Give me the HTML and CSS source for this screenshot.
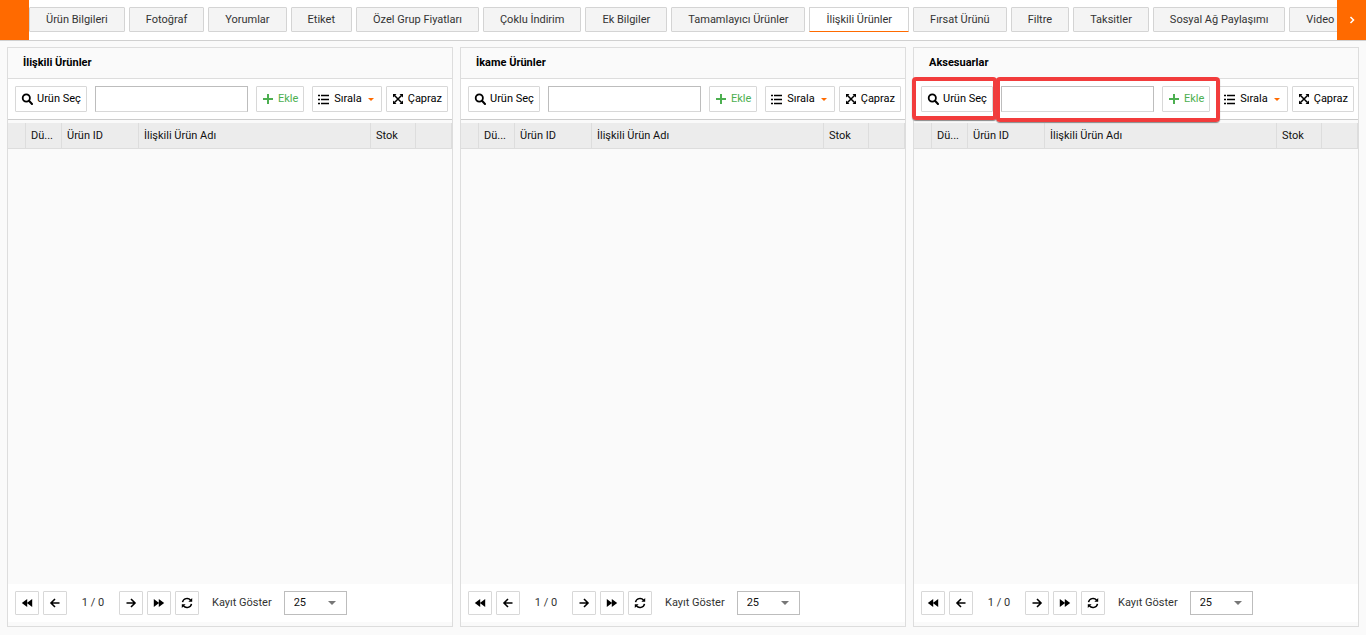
FILE: index.html
```html
<!DOCTYPE html>
<html lang="tr">
<head>
<meta charset="utf-8">
<meta name="viewport" content="width=device-width, initial-scale=1">
<title>İlişkili Ürünler</title>
<link rel="stylesheet" href="styles.css">
</head>
<body class="page">
<svg class="sprite" aria-hidden="true">
  <symbol id="i-search" viewBox="0 0 12 12"><circle cx="5.300" cy="5" r="3.600" fill="none" stroke="currentColor" stroke-width="1.800"/><path d="M8 7.800L11 11" stroke="currentColor" stroke-width="2" stroke-linecap="round"/></symbol>
  <symbol id="i-plus" viewBox="0 0 12 12"><path d="M6 1v10M1 6h10" stroke="currentColor" stroke-width="2"/></symbol>
  <symbol id="i-list" viewBox="0 0 12 12"><path d="M0 2.500h2M0 6.500h2M0 10.500h2M3 2.500h8M3 6.500h8M3 10.500h8" stroke="currentColor" stroke-width="1.600"/></symbol>
  <symbol id="i-cross" viewBox="0 0 12 12"><path d="M2.500 2.500l7 7M9.500 2.500l-7 7" stroke="currentColor" stroke-width="1.500"/><path d="M1 1h3.500L1 4.500zM11 1v3.500L7.500 1zM1 11V7.500L4.500 11zM11 11H7.500L11 7.500z" fill="currentColor"/></symbol>
  <symbol id="i-first" viewBox="0 0 12 12"><path d="M6.200 2v8L.8 6zM11.200 2v8L5.900 6z" fill="currentColor"/></symbol>
  <symbol id="i-last" viewBox="0 0 12 12"><path d="M.8 2l5.300 4L.8 10zM5.800 2l5.400 4-5.400 4z" fill="currentColor"/></symbol>
  <symbol id="i-prev" viewBox="0 0 12 12"><path d="M10.500 6H2.300M6 2L2 6l4 4" fill="none" stroke="currentColor" stroke-width="1.600"/></symbol>
  <symbol id="i-next" viewBox="0 0 12 12"><path d="M1.500 6h8.200M6 2l4 4-4 4" fill="none" stroke="currentColor" stroke-width="1.600"/></symbol>
  <symbol id="i-refresh" viewBox="0 0 12 12"><path d="M1.500 5.200A4.600 4.600 0 0 1 9.600 3.200M10.500 6.800A4.600 4.600 0 0 1 2.400 8.800" fill="none" stroke="currentColor" stroke-width="1.500"/><path d="M11.200 1v3.800H7.400zM.8 11V7.200h3.800z" fill="currentColor"/></symbol>
  <symbol id="i-chevron" viewBox="0 0 12 12"><path d="M4.500 3l3 3-3 3" fill="none" stroke="currentColor" stroke-width="1.500"/></symbol>
</svg>

<header class="tabbar">
  <button class="scroller" type="button" aria-label="Geri"></button>
  <nav class="tabs">
    <button class="tab" type="button">Ürün Bilgileri</button>
    <button class="tab" type="button">Fotoğraf</button>
    <button class="tab" type="button">Yorumlar</button>
    <button class="tab" type="button">Etiket</button>
    <button class="tab" type="button">Özel Grup Fiyatları</button>
    <button class="tab" type="button">Çoklu İndirim</button>
    <button class="tab" type="button">Ek Bilgiler</button>
    <button class="tab" type="button">Tamamlayıcı Ürünler</button>
    <button class="tab tab-active" type="button">İlişkili Ürünler</button>
    <button class="tab" type="button">Fırsat Ürünü</button>
    <button class="tab" type="button">Filtre</button>
    <button class="tab" type="button">Taksitler</button>
    <button class="tab" type="button">Sosyal Ağ Paylaşımı</button>
    <button class="tab" type="button">Video</button>
  </nav>
  <button class="scroller" type="button" aria-label="İleri"><svg class="icon"><use href="#i-chevron"/></svg></button>
</header>

<main class="panels">
  <section class="panel">
    <h2 class="panel-title">İlişkili Ürünler</h2>
    <div class="toolbar">
      <button class="btn" type="button"><svg class="icon"><use href="#i-search"/></svg>Urün Seç</button>
      <input class="field" type="text" aria-label="Ürün">
      <button class="btn btn-add" type="button"><svg class="icon"><use href="#i-plus"/></svg>Ekle</button>
      <div class="group">
        <button class="btn" type="button"><svg class="icon"><use href="#i-list"/></svg>Sırala<span class="caret"></span></button>
        <button class="btn" type="button"><svg class="icon"><use href="#i-cross"/></svg>Çapraz</button>
      </div>
    </div>
    <div class="grid">
      <table class="table">
        <thead><tr><th class="c-mark"></th><th class="c-edit">Dü...</th><th class="c-id">Ürün ID</th><th>İlişkili Ürün Adı</th><th class="c-stock">Stok</th><th class="c-end"></th></tr></thead>
      </table>
    </div>
    <footer class="pager">
      <button class="pg" type="button" aria-label="İlk"><svg class="icon"><use href="#i-first"/></svg></button>
      <button class="pg" type="button" aria-label="Önceki"><svg class="icon"><use href="#i-prev"/></svg></button>
      <span class="count">1 / 0</span>
      <button class="pg" type="button" aria-label="Sonraki"><svg class="icon"><use href="#i-next"/></svg></button>
      <button class="pg" type="button" aria-label="Son"><svg class="icon"><use href="#i-last"/></svg></button>
      <button class="pg" type="button" aria-label="Yenile"><svg class="icon"><use href="#i-refresh"/></svg></button>
      <label class="size-label" for="size1">Kayıt Göster</label>
      <span class="size"><select class="size-select" id="size1"><option>25</option></select></span>
    </footer>
  </section>

  <section class="panel">
    <h2 class="panel-title">İkame Ürünler</h2>
    <div class="toolbar">
      <button class="btn" type="button"><svg class="icon"><use href="#i-search"/></svg>Urün Seç</button>
      <input class="field" type="text" aria-label="Ürün">
      <button class="btn btn-add" type="button"><svg class="icon"><use href="#i-plus"/></svg>Ekle</button>
      <div class="group">
        <button class="btn" type="button"><svg class="icon"><use href="#i-list"/></svg>Sırala<span class="caret"></span></button>
        <button class="btn" type="button"><svg class="icon"><use href="#i-cross"/></svg>Çapraz</button>
      </div>
    </div>
    <div class="grid">
      <table class="table">
        <thead><tr><th class="c-mark"></th><th class="c-edit">Dü...</th><th class="c-id">Ürün ID</th><th>İlişkili Ürün Adı</th><th class="c-stock">Stok</th><th class="c-end"></th></tr></thead>
      </table>
    </div>
    <footer class="pager">
      <button class="pg" type="button" aria-label="İlk"><svg class="icon"><use href="#i-first"/></svg></button>
      <button class="pg" type="button" aria-label="Önceki"><svg class="icon"><use href="#i-prev"/></svg></button>
      <span class="count">1 / 0</span>
      <button class="pg" type="button" aria-label="Sonraki"><svg class="icon"><use href="#i-next"/></svg></button>
      <button class="pg" type="button" aria-label="Son"><svg class="icon"><use href="#i-last"/></svg></button>
      <button class="pg" type="button" aria-label="Yenile"><svg class="icon"><use href="#i-refresh"/></svg></button>
      <label class="size-label" for="size2">Kayıt Göster</label>
      <span class="size"><select class="size-select" id="size2"><option>25</option></select></span>
    </footer>
  </section>

  <section class="panel">
    <h2 class="panel-title">Aksesuarlar</h2>
    <div class="toolbar">
      <button class="btn" type="button"><svg class="icon"><use href="#i-search"/></svg>Urün Seç</button>
      <input class="field" type="text" aria-label="Ürün">
      <button class="btn btn-add" type="button"><svg class="icon"><use href="#i-plus"/></svg>Ekle</button>
      <div class="group">
        <button class="btn" type="button"><svg class="icon"><use href="#i-list"/></svg>Sırala<span class="caret"></span></button>
        <button class="btn" type="button"><svg class="icon"><use href="#i-cross"/></svg>Çapraz</button>
      </div>
      <span class="mark mark-pick"></span>
      <span class="mark mark-add"></span>
    </div>
    <div class="grid">
      <table class="table">
        <thead><tr><th class="c-mark"></th><th class="c-edit">Dü...</th><th class="c-id">Ürün ID</th><th>İlişkili Ürün Adı</th><th class="c-stock">Stok</th><th class="c-end"></th></tr></thead>
      </table>
    </div>
    <footer class="pager">
      <button class="pg" type="button" aria-label="İlk"><svg class="icon"><use href="#i-first"/></svg></button>
      <button class="pg" type="button" aria-label="Önceki"><svg class="icon"><use href="#i-prev"/></svg></button>
      <span class="count">1 / 0</span>
      <button class="pg" type="button" aria-label="Sonraki"><svg class="icon"><use href="#i-next"/></svg></button>
      <button class="pg" type="button" aria-label="Son"><svg class="icon"><use href="#i-last"/></svg></button>
      <button class="pg" type="button" aria-label="Yenile"><svg class="icon"><use href="#i-refresh"/></svg></button>
      <label class="size-label" for="size3">Kayıt Göster</label>
      <span class="size"><select class="size-select" id="size3"><option>25</option></select></span>
    </footer>
  </section>
</main>
</body>
</html>
```
FILE: styles.css
```css
* { box-sizing: border-box; }

.page {
  margin: 0;
  min-height: 100vh;
  display: flex;
  flex-direction: column;
  background: #fafafa;
  color: #111;
  font: 11px/16px Roboto, "Noto Sans", sans-serif;
}

.sprite { display: none; }
.icon { width: 12px; height: 12px; flex: none; display: block; }

button, input, select { font: inherit; color: inherit; margin: 0; }

/* Tab bar */
.tabbar {
  display: flex;
  background: #fff;
  border-bottom: 1px solid #d0d0d0;
}
.scroller {
  flex: none;
  width: 29px;
  height: 40px;
  padding: 0;
  border: 0;
  background: #ff6a00;
  color: #fff;
  display: flex;
  align-items: center;
  justify-content: center;
}
.tabs {
  flex: 1;
  min-width: 0;
  display: flex;
  gap: 4px;
  padding: 7px 0 8px;
  overflow: hidden;
}
.tab {
  flex: none;
  height: 25px;
  padding: 0 16px;
  border: 1px solid #d4d4d4;
  border-radius: 1px;
  background: #f4f4f4;
  color: #333;
}
.tab-active { background: #fff; border-bottom-color: #ff6a00; }

/* Panels */
.panels {
  flex: 1;
  display: grid;
  grid-template-columns: repeat(3, minmax(0, 1fr));
  gap: 7px;
  padding: 6px 7px 8px;
}
.panel {
  display: flex;
  flex-direction: column;
  border: 1px solid #ddd;
  padding-bottom: 4px;
}
.panel-title {
  margin: 0;
  padding: 7px 15px;
  border-bottom: 1px solid #ddd;
  font-size: 11px;
  font-weight: 700;
  color: #000;
}
.toolbar {
  position: relative;
  display: flex;
  gap: 8px;
  padding: 7px 4px 7px 7px;
  background: #fff;
  border-bottom: 1px solid #ccc;
}
.group { display: flex; gap: 4px; }
.btn {
  flex: none;
  height: 26px;
  display: flex;
  align-items: center;
  gap: 4px;
  padding: 0 5px;
  border: 1px solid #d8d8d8;
  border-radius: 1px;
  background: #fff;
  color: #000;
}
.btn-add { color: #4caf50; }
.caret {
  margin: 1px 2px 0;
  border: 3px solid transparent;
  border-top-color: #ff6a00;
  border-bottom: 0;
}
.field {
  flex: 1;
  min-width: 0;
  height: 26px;
  padding: 0 6px;
  border: 1px solid #bdbdbd;
  border-bottom-color: #d8d8d8;
  border-radius: 0;
  background: #fff;
}

/* Highlight frames over the toolbar */
.mark {
  position: absolute;
  border: 4px solid #f23c3c;
  border-radius: 4px;
  box-shadow: 0 1px 1px #888;
  pointer-events: none;
}
.mark-pick { left: -2px; top: -2px; width: 85px; height: 43px; }
.mark-add { left: 82px; right: 138px; top: -2px; height: 45px; }

/* Data grid */
.grid { flex: 1; padding-top: 3px; }
.table {
  width: 100%;
  table-layout: fixed;
  border-collapse: separate;
  border-spacing: 0;
}
.table th {
  height: 26px;
  padding: 0 5px;
  border-right: 1px solid #ddd;
  border-bottom: 1px solid #ddd;
  background: #ececec;
  font-weight: 400;
  text-align: left;
  white-space: nowrap;
  overflow: hidden;
  text-overflow: ellipsis;
}
.table .c-mark { width: 18px; }
.table .c-edit { width: 36px; }
.table .c-id { width: 77px; }
.table .c-stock { width: 45px; }
.table .c-end { width: 36px; }

/* Pager */
.pager {
  display: flex;
  align-items: center;
  gap: 4px;
  padding: 7px;
  background: #fff;
}
.pg {
  width: 24px;
  height: 24px;
  padding: 0;
  display: flex;
  align-items: center;
  justify-content: center;
  border: 1px solid #d8d8d8;
  border-radius: 1px;
  background: #fff;
  color: #000;
}
.count { width: 44px; text-align: center; color: #333; }
.size-label { margin: 0 8px 0 9px; color: #333; }
.size { position: relative; }
.size::after {
  content: "";
  position: absolute;
  right: 11px;
  top: 10px;
  border: 4px solid transparent;
  border-top-color: #777;
  border-bottom: 0;
  pointer-events: none;
}
.size-select {
  display: block;
  width: 63px;
  height: 24px;
  padding: 0 10px 0 9px;
  appearance: none;
  border: 1px solid #bdbdbd;
  border-radius: 0;
  background: #fff;
}
```
